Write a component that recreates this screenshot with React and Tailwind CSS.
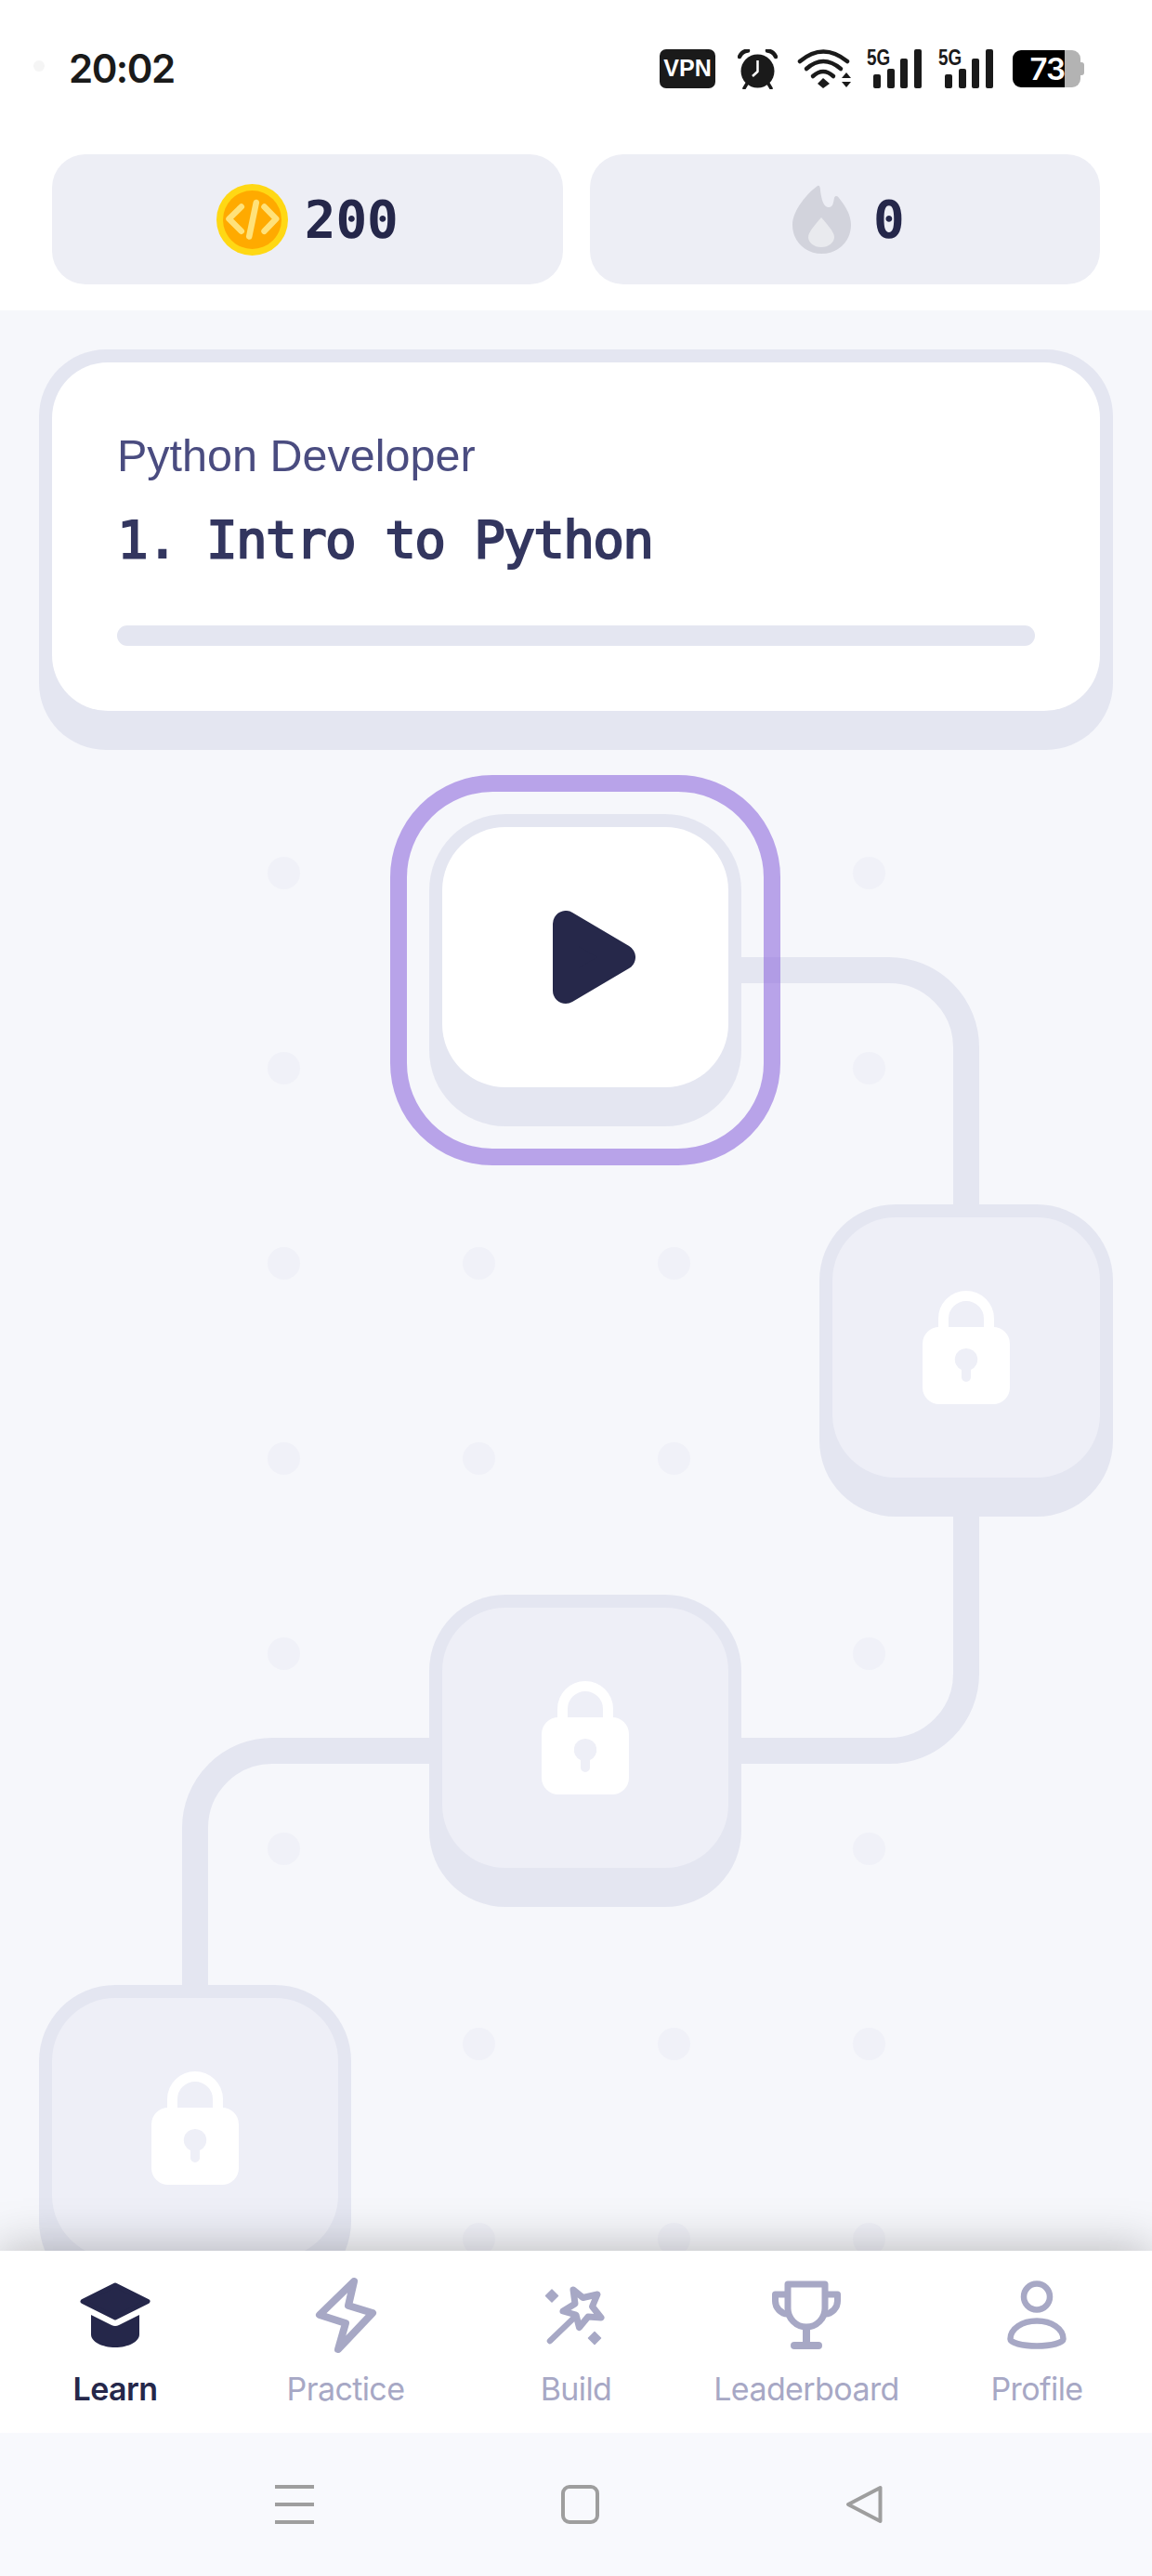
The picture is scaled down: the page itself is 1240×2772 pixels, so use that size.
import React from 'react';

const MONO = "font-['DejaVu_Sans_Mono',monospace]";

const dotRows = [
  [1, 0, 0, 1],
  [1, 0, 0, 1],
  [1, 1, 1, 0],
  [1, 1, 1, 0],
  [1, 0, 0, 1],
  [1, 0, 0, 1],
  [0, 1, 1, 1],
  [0, 1, 1, 1],
];

const tabs = [
  { label: 'Learn', icon: <HatIcon />, active: true },
  { label: 'Practice', icon: <BoltIcon /> },
  { label: 'Build', icon: <WandIcon /> },
  { label: 'Leaderboard', icon: <TrophyIcon /> },
  { label: 'Profile', icon: <ProfileIcon /> },
];

function HatIcon() {
  return (
    <svg width="76" height="70" viewBox="0 0 76 70" fill="#25274a">
      <path d="M38 3 L73 20.5 L38 38 L3 20.5 Z" stroke="#25274a" strokeWidth="5" strokeLinejoin="round" />
      <path d="M12 35 L34 46 Q38 48 42 46 L64 35 V56 C64 64 52 70 38 70 C24 70 12 64 12 56 Z" />
    </svg>
  );
}

function BoltIcon() {
  return (
    <svg width="69" height="84" viewBox="0 0 69 84" fill="none" stroke="#a7a8c5" strokeWidth="8" strokeLinejoin="round">
      <path d="M43 6 L6 42 L34 51 L26 79 L63 40 L37 32 Z" />
    </svg>
  );
}

function WandIcon() {
  return (
    <svg width="100" height="90" viewBox="0 0 100 90" fill="none" className="-mx-[18px]">
      <path d="M47 18 L57.5 26.5 L73 23 L67.5 36 L77 48 L63 47 L53.5 58.5 L50 45 L36 41 L49 33 Z" stroke="#a7a8c5" strokeWidth="7" strokeLinejoin="round" />
      <path d="M48 48 L22 73" stroke="#a7a8c5" strokeWidth="6.5" strokeLinecap="round" />
      <path d="M24 18 L30.5 24.5 L24 31 L17.5 24.5 Z" fill="#a7a8c5" stroke="#a7a8c5" strokeWidth="1.5" strokeLinejoin="round" />
      <path d="M70 63.5 L76.5 70 L70 76.5 L63.5 70 Z" fill="#a7a8c5" stroke="#a7a8c5" strokeWidth="1.5" strokeLinejoin="round" />
    </svg>
  );
}

function TrophyIcon() {
  return (
    <svg width="74" height="74" viewBox="0 0 74 74" fill="none" stroke="#a7a8c5" strokeWidth="7" strokeLinejoin="round">
      <path d="M17 4 H57 V30 a20 20 0 0 1 -40 0 Z" />
      <path d="M17 15 H3.5 V22 a14 14 0 0 0 13.5 14" />
      <path d="M57 15 H70.5 V22 a14 14 0 0 1 -13.5 14" />
      <path d="M37 52 V68" strokeWidth="8" />
      <path d="M24 70 H50" strokeWidth="8" strokeLinecap="round" />
    </svg>
  );
}

function ProfileIcon() {
  return (
    <svg width="64" height="74" viewBox="0 0 64 74" fill="none" stroke="#a7a8c5" strokeWidth="6.5">
      <circle cx="32" cy="17.5" r="14" />
      <path d="M3.5 63 C3.5 52 16 43.5 32 43.5 C48 43.5 60.5 52 60.5 63 C60.5 67 48 70.5 32 70.5 C16 70.5 3.5 67 3.5 63 Z" />
    </svg>
  );
}

function LockIcon() {
  return (
    <svg width="94" height="122" viewBox="0 0 94 122" fill="none">
      <path d="M22.5 40 V30 a24.5 24.5 0 0 1 49 0 V40" stroke="#fff" strokeWidth="11" />
      <path
        fill="#fff"
        fillRule="evenodd"
        d="M18 39 H76 a18 18 0 0 1 18 18 V104 a18 18 0 0 1 -18 18 H18 a18 18 0 0 1 -18 -18 V57 a18 18 0 0 1 18 -18 Z M47 62 a12 12 0 0 0 -5 23 V93 a5 5 0 0 0 10 0 V85 a12 12 0 0 0 -5 -23 Z"
      />
    </svg>
  );
}

function CoinIcon() {
  return (
    <svg width="77" height="77" viewBox="-38.5 -38.5 77 77" fill="none">
      <circle r="38.5" fill="#ffd814" />
      <circle r="31.5" fill="#ffaa00" />
      <g stroke="#ffe27a" strokeWidth="6.5" strokeLinecap="round" strokeLinejoin="round">
        <path d="M-11.7 -14 L-25 -1 L-11.7 12.3" />
        <path d="M13 -14 L25.7 -1 L13 12.3" />
        <path d="M4.3 -18.5 L-3.3 18" />
      </g>
    </svg>
  );
}

function FlameIcon() {
  return (
    <svg width="63" height="74" viewBox="0 0 63 74" className="ml-[8px]">
      <path
        fill="#d2d3dc"
        d="M27 1 C29 0 30 2 30 6 C31 14 33 23 38 24 C44 25 44 18 45 14 C46 11 49 12 50 14 C58 24 63 33 63 43 C63 61 49 74 31.500 74 C14 74 0 61 0 43 C0 27 17 8 27 1 Z"
      />
      <path
        fill="#e9eaee"
        d="M31 35 C35 40 45 50 45 56 C45 62 39 67 31 67 C23 67 17 62 17 56 C17 50 27 40 31 35 Z"
      />
    </svg>
  );
}

function SignalIcon() {
  return (
    <div className="relative w-[60px] h-[42px]">
      <span className="absolute left-0 top-0 origin-top-left scale-x-[0.82] text-[23px] leading-[18px] font-bold text-[#1a1a1a] font-['Liberation_Sans',sans-serif]">5G</span>
      <svg width="60" height="42" viewBox="0 0 60 42" fill="#1a1a1a">
        <rect x="7" y="27" width="8" height="15" rx="2" />
        <rect x="22" y="21" width="8" height="21" rx="2" />
        <rect x="36" y="10" width="8" height="32" rx="2" />
        <rect x="51" y="0" width="8" height="42" rx="2" />
      </svg>
    </div>
  );
}

function WifiIcon() {
  return (
    <svg width="58" height="42" viewBox="0 0 58 42" fill="none" stroke="#1a1a1a" strokeWidth="4.500" strokeLinecap="round">
      <path d="M3 13 Q28 -8 54 13" />
      <path d="M10 21 Q28 5 47 21" />
      <path d="M17 29 Q28 19 39 29" />
      <path d="M28 31 L35 37 L28 42 L22 37 Z" fill="#1a1a1a" stroke="none" />
      <path d="M53 25 L58 31 H48 Z" fill="#1a1a1a" stroke="none" />
      <path d="M48 35 H58 L53 41 Z" fill="#1a1a1a" stroke="none" />
    </svg>
  );
}

function AlarmIcon() {
  return (
    <svg width="43" height="43" viewBox="0 0 43 43" fill="none">
      <circle cx="21.500" cy="23.500" r="18" fill="#1a1a1a" />
      <path d="M2 8 Q5 2 11 1.500" stroke="#1a1a1a" strokeWidth="4.500" strokeLinecap="round" />
      <path d="M41 8 Q38 2 32 1.500" stroke="#1a1a1a" strokeWidth="4.500" strokeLinecap="round" />
      <path d="M10 37 L7 42" stroke="#1a1a1a" strokeWidth="3.500" strokeLinecap="round" />
      <path d="M33 37 L36 42" stroke="#1a1a1a" strokeWidth="3.500" strokeLinecap="round" />
      <path d="M21.500 12 V24 L16 29" stroke="#fff" strokeWidth="2.500" strokeLinejoin="round" />
    </svg>
  );
}

function Node({ className, width = 'w-[336px]', innerClass = 'bg-[#eeeff7]', children }) {
  return (
    <div className={`absolute ${className} ${width} h-[336px] rounded-[82px] bg-[#e4e6f1] pt-[14px] px-[14px]`}>
      <div className={`h-[280px] rounded-[68px] flex items-center justify-center ${innerClass}`}>{children}</div>
    </div>
  );
}

export default function App() {
  return (
    <div className="w-[1240px] h-[2772px] flex flex-col overflow-hidden bg-white font-['Inter',sans-serif]">
      {/* Status bar and counters */}
      <div className="h-[334px] bg-white shrink-0">
        <div className="h-[166px] flex items-start justify-between pl-[36px] pr-[73px] pt-[53px]">
          <div className="flex items-center h-[42px]">
            <div className="w-[12px] h-[12px] rounded-full bg-[#f5f5f5] -mt-[6px]" />
            <span className="ml-[26px] text-[42px] leading-[42px] font-semibold text-[#1a1a1a] tracking-[-1.5px]">20:02</span>
          </div>
          <div className="flex items-center h-[42px]">
            <div className="w-[60px] h-[42px] rounded-[7px] bg-[#1a1a1a] flex items-center justify-center text-white text-[25px] font-bold font-['Liberation_Sans',sans-serif]">VPN</div>
            <div className="ml-[24px]"><AlarmIcon /></div>
            <div className="ml-[21px]"><WifiIcon /></div>
            <div className="ml-[17px]"><SignalIcon /></div>
            <div className="ml-[17px]"><SignalIcon /></div>
            <div className="ml-[20px] flex items-center h-[40px]">
              <div className="w-[56px] h-[40px] bg-black rounded-l-[9px] flex items-center justify-end text-white text-[33px] leading-none font-semibold tracking-[-1px]">73</div>
              <div className="w-[17px] h-[40px] bg-[#b3b3b3] rounded-r-[9px]" />
              <div className="w-[4px] h-[14px] bg-[#b3b3b3] rounded-r-[3px]" />
            </div>
          </div>
        </div>
        <div className="flex gap-[29px] px-[56px]">
          <div className="flex-1 h-[140px] rounded-[36px] bg-[#edeef5] flex items-center justify-center">
            <CoinIcon />
            <span className={`ml-[18px] ${MONO} font-bold text-[56px] leading-none text-[#25274a]`}>200</span>
          </div>
          <div className="flex-1 h-[140px] rounded-[36px] bg-[#edeef5] flex items-center justify-center">
            <FlameIcon />
            <span className={`ml-[24px] ${MONO} font-bold text-[56px] leading-none text-[#25274a]`}>0</span>
          </div>
        </div>
      </div>

      {/* Learning path */}
      <div className="relative h-[2088px] shrink-0 flex flex-col bg-[#f6f7fb] pt-[42px] overflow-hidden">
        <div className="relative z-10 mx-[42px] h-[431px] shrink-0 rounded-[72px] bg-[#e4e6f1] pt-[14px] px-[14px]">
          <div className="h-[375px] rounded-[60px] bg-white px-[70px] pt-[72px]">
            <p className="text-[48.5px] leading-[56px] text-[#4a4c80] font-['Liberation_Sans',sans-serif]">Python Developer</p>
            <h1 className={`mt-[31px] ${MONO} font-normal text-[56px] leading-[64px] tracking-[-1.7px] text-[#33365f] [-webkit-text-stroke:2px_#33365f]`}>1. Intro to Python</h1>
            <div className="mt-[60px] h-[22px] rounded-full bg-[#e4e6f1]" />
          </div>
        </div>

        <div className="relative flex-1">
          {/* dots */}
          <div className="absolute left-[287.500px] top-[115px] grid grid-cols-[repeat(4,35px)] gap-[175px]">
            {dotRows.flat().map((on, i) => (
              <div key={i} className={`w-[35px] h-[35px] rounded-full ${on ? 'bg-[#f0f1f8]' : ''}`} />
            ))}
          </div>

          {/* connectors */}
          <svg className="absolute inset-0" width="1240" height="1615" viewBox="0 807 1240 1615" fill="none" stroke="#e4e6f1" strokeWidth="28">
            <path d="M790 1044 H957 A83 83 0 0 1 1040 1127 V1300" />
            <path d="M1040 1628 V1801 A83 83 0 0 1 957 1884 H790" />
            <path d="M470 1884 H293 A83 83 0 0 0 210 1967 V2140" />
          </svg>

          <Node className="left-[462px] top-[69px]" innerClass="bg-white">
            <svg width="89" height="100" viewBox="0 0 89 100" className="ml-[19px]">
              <path d="M14 14 V86 L75 50 Z" fill="#26284a" stroke="#26284a" strokeWidth="28" strokeLinejoin="round" />
            </svg>
          </Node>
          {/* current lesson ring */}
          <div className="absolute left-[420px] top-[27px] w-[420px] h-[420px] rounded-[110px] border-[18px] border-[#906bdd]/60" />

          <Node className="left-[882px] top-[489px]" width="w-[316px]"><LockIcon /></Node>
          <Node className="left-[462px] top-[909px]"><LockIcon /></Node>
          <Node className="left-[42px] top-[1329px]"><LockIcon /></Node>
        </div>
      </div>

      {/* Tab bar */}
      <div className="relative z-10 h-[196px] shrink-0 bg-white grid grid-cols-5 pt-[27px] shadow-[0_0_50px_rgba(0,0,0,0.28)]">
        {tabs.map((t) => (
          <div key={t.label} className="flex flex-col items-center">
            <div className="h-[84px] flex items-center justify-center">{t.icon}</div>
            <span className={`mt-[16px] text-[34px] leading-[44px] tracking-[-0.6px] ${t.active ? 'font-semibold text-[#25274a]' : 'text-[#a7a8c5]'}`}>{t.label}</span>
          </div>
        ))}
      </div>

      {/* Android nav bar */}
      <div className="relative z-20 h-[154px] shrink-0 bg-[#f8f9fd] flex items-center pl-[296px]">
        <div className="w-[42px] flex flex-col gap-[15px]">
          <div className="h-[4px] bg-[#9e9e9e]" />
          <div className="h-[4px] bg-[#9e9e9e]" />
          <div className="h-[4px] bg-[#9e9e9e]" />
        </div>
        <div className="ml-[266px] w-[41px] h-[42px] rounded-[9px] border-[4px] border-[#9e9e9e]" />
        <svg width="40" height="42" viewBox="0 0 40 42" fill="none" className="ml-[265px]">
          <path d="M37.500 3 V39 L3 21 Z" stroke="#9e9e9e" strokeWidth="4" strokeLinejoin="round" />
        </svg>
      </div>
    </div>
  );
}
